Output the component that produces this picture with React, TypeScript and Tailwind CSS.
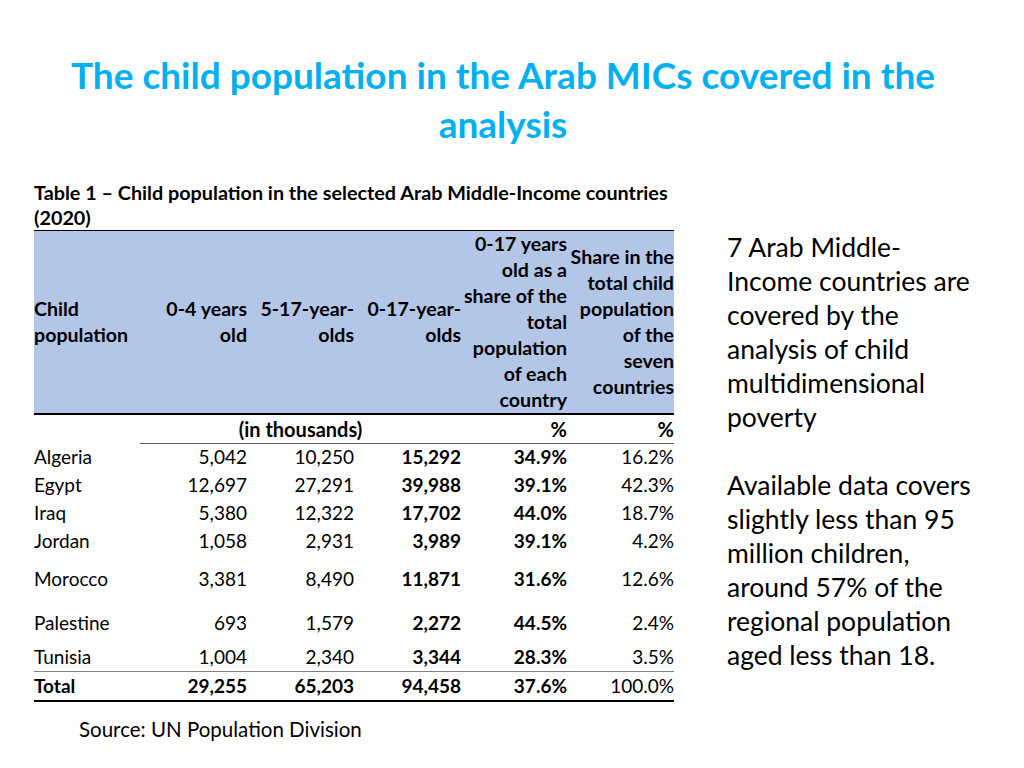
import React from "react";

const rows = [
  { name: "Algeria", a: "5,042", b: "10,250", c: "15,292", d: "34.9%", e: "16.2%", h: "h-[28px]" },
  { name: "Egypt", a: "12,697", b: "27,291", c: "39,988", d: "39.1%", e: "42.3%", h: "h-[28px]" },
  { name: "Iraq", a: "5,380", b: "12,322", c: "17,702", d: "44.0%", e: "18.7%", h: "h-[28px]" },
  { name: "Jordan", a: "1,058", b: "2,931", c: "3,989", d: "39.1%", e: "4.2%", h: "h-[28px]" },
  { name: "Morocco", a: "3,381", b: "8,490", c: "11,871", d: "31.6%", e: "12.6%", h: "h-[48px]" },
  { name: "Palestine", a: "693", b: "1,579", c: "2,272", d: "44.5%", e: "2.4%", h: "h-[40px]" },
  { name: "Tunisia", a: "1,004", b: "2,340", c: "3,344", d: "28.3%", e: "3.5%", h: "h-[28px]" },
];

export default function App() {
  return (
    <div className="w-[1024px] h-[768px] bg-white text-black font-['Lato','Liberation_Sans',sans-serif] overflow-hidden">
      <h1 className="pt-[50px] pr-[18px] text-center text-[37px] leading-[49px] font-bold text-[#00B0F0] whitespace-nowrap">
        The child population in the Arab MICs covered in the
        <br />
        analysis
      </h1>
      <div className="flex mt-[32px]">
        <div className="ml-[34px] w-[640px] shrink-0 flex flex-col">
          <div className="text-[19.8px] leading-[25px] font-bold whitespace-nowrap">
            Table 1 – Child population in the selected Arab Middle-Income countries
            <br />
            (2020)
          </div>
          <table className="w-[640px] table-fixed border-collapse text-[19px] leading-[26px] whitespace-nowrap">
            <colgroup>
              <col className="w-[106px]" />
              <col className="w-[107px]" />
              <col className="w-[107px]" />
              <col className="w-[107px]" />
              <col className="w-[106px]" />
              <col className="w-[107px]" />
            </colgroup>
            <thead>
              <tr className="h-[182px] bg-[#B4C6E7] text-[19.6px] border-t border-black border-b-2">
                <th className="text-left align-middle p-0 font-bold">Child<br />population</th>
                <th className="text-right align-middle p-0 font-bold">0-4 years<br />old</th>
                <th className="text-right align-middle p-0 font-bold">5-17-year-<br />olds</th>
                <th className="text-right align-middle p-0 font-bold">0-17-year-<br />olds</th>
                <th className="text-right align-middle p-0 font-bold">0-17 years<br />old as a<br />share of the<br />total<br />population<br />of each<br />country</th>
                <th className="text-right align-middle p-0 font-bold">Share in the<br />total child<br />population<br />of the<br />seven<br />countries</th>
              </tr>
            </thead>
            <tbody>
              <tr className="h-[29px] font-bold text-[20px]">
                <td className="p-0"></td>
                <td colSpan={3} className="p-0 text-center border-b border-[#595959]">(in thousands)</td>
                <td className="p-0 text-right border-b border-[#595959]">%</td>
                <td className="p-0 text-right border-b border-[#595959]">%</td>
              </tr>
              {rows.map((r) => (
                <tr key={r.name} className={r.h}>
                  <td className="p-0 text-left">{r.name}</td>
                  <td className="p-0 text-right">{r.a}</td>
                  <td className="p-0 text-right">{r.b}</td>
                  <td className="p-0 text-right font-bold">{r.c}</td>
                  <td className="p-0 text-right font-bold">{r.d}</td>
                  <td className="p-0 text-right">{r.e}</td>
                </tr>
              ))}
              <tr className="h-[30px] border-t border-[#808080] border-b-2 border-b-black">
                <td className="p-0 text-left font-bold">Total</td>
                <td className="p-0 text-right font-bold">29,255</td>
                <td className="p-0 text-right font-bold">65,203</td>
                <td className="p-0 text-right font-bold">94,458</td>
                <td className="p-0 text-right font-bold">37.6%</td>
                <td className="p-0 text-right">100.0%</td>
              </tr>
            </tbody>
          </table>
          <div className="mt-[14px] ml-[45px] text-[20.5px] leading-[26px] whitespace-nowrap">Source: UN Population Division</div>
        </div>
        <div className="ml-[53px] mt-[50px] text-[26.5px] leading-[34px] whitespace-nowrap">
          <p>
            7 Arab Middle-
            <br />
            Income countries are
            <br />
            covered by the
            <br />
            analysis of child
            <br />
            multidimensional
            <br />
            poverty
          </p>
          <p className="mt-[34px]">
            Available data covers
            <br />
            slightly less than 95
            <br />
            million children,
            <br />
            around 57% of the
            <br />
            regional population
            <br />
            aged less than 18.
          </p>
        </div>
      </div>
    </div>
  );
}
